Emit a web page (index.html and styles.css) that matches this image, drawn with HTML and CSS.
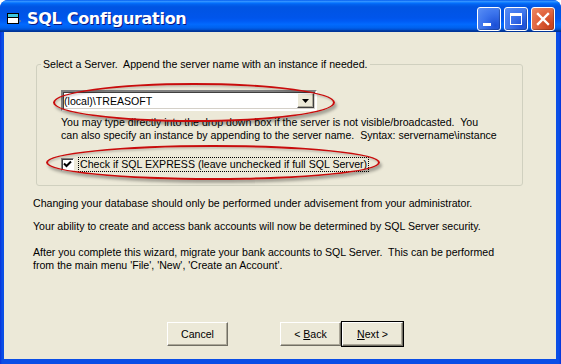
FILE: index.html
```html
<!DOCTYPE html>
<html lang="en">
<head>
  <meta charset="UTF-8" />
  <title>SQL Configuration</title>
  <link rel="stylesheet" href="styles.css">
</head>
<body>
  <div class="window">
    <div class="titlebar">
      <svg class="app-icon" width="14" height="12" viewBox="0 0 14 12">
        <rect x="0.5" y="0.5" width="11" height="10" fill="#fff" stroke="#000"/>
        <rect x="1" y="1" width="10" height="3" fill="#3cc7e0"/>
        <path d="M1 4.5 H11" stroke="#000"/>
        <path d="M12 8 H14" stroke="#8a8a8a"/>
      </svg>
      <span class="title">SQL Configuration</span>
      <div class="caption-buttons">
        <span class="cap-btn">
          <svg width="22" height="22" viewBox="0 0 22 22"><rect x="5" y="15" width="8" height="3" fill="#fff"/></svg>
        </span>
        <span class="cap-btn">
          <svg width="22" height="22" viewBox="0 0 22 22"><rect x="5.5" y="5.5" width="11" height="11" fill="none" stroke="#fff"/><rect x="5" y="5" width="12" height="3" fill="#fff"/></svg>
        </span>
        <span class="cap-btn close">
          <svg width="22" height="22" viewBox="0 0 22 22"><path d="M6 6 L16 16 M16 6 L6 16" stroke="#fff" stroke-width="2.4" stroke-linecap="square"/></svg>
        </span>
      </div>
    </div>

    <div class="client">
      <fieldset class="group">
        <legend>Select a Server.&nbsp; Append the server name with an instance if needed.</legend>
        <div class="combo">
          <span class="combo-text">(local)\TREASOFT</span>
          <span class="combo-btn">
            <svg width="7" height="4" viewBox="0 0 7 4"><path d="M0 0 H7 L3.5 4 Z" fill="#000"/></svg>
          </span>
        </div>
        <p class="hint">You may type directly into the drop down box if the server is not visible/broadcasted.&nbsp; You<br>can also specify an instance by appending to the server name.&nbsp; Syntax: servername\instance</p>
        <label class="check">
          <span class="box">
            <svg width="9" height="9" viewBox="0 0 9 9"><path d="M1 3.5 L3.5 6 L8 1.5" fill="none" stroke="#000" stroke-width="2"/></svg>
          </span>
          <span class="focus">Check if SQL EXPRESS (leave unchecked if full SQL Server)</span>
        </label>
      </fieldset>

      <p class="note first">Changing your database should only be performed under advisement from your administrator.</p>
      <p class="note">Your ability to create and access bank accounts will now be determined by SQL Server security.</p>
      <p class="note wide">After you complete this wizard, migrate your bank accounts to SQL Server.&nbsp; This can be performed<br>from the main menu 'File', 'New', 'Create an Account'.</p>

      <div class="buttons">
        <button class="btn">Cancel</button>
        <div class="nav">
          <button class="btn">&lt; <u>B</u>ack</button>
          <button class="btn default"><u>N</u>ext &gt;</button>
        </div>
      </div>
    </div>

    <!-- red highlight marks drawn over the dialog -->
    <div class="oval oval-server"></div>
    <div class="oval oval-express"></div>
  </div>
</body>
</html>
```

FILE: styles.css
```css
body {
  margin: 0;
  background: #fff;
  font-family: "Liberation Sans", Arial, sans-serif;
  font-size: 10.6px;
  color: #000;
}
.window {
  position: relative;
  width: 561px;
  height: 364px;
  display: flex;
  flex-direction: column;
  background: linear-gradient(90deg, #0831d9 0, #0a4ee6 2px, #0a4ee6 calc(100% - 2px), #0831d9 100%);
  border-radius: 8px 8px 0 0;
  overflow: hidden;
}
.titlebar {
  height: 32px;
  box-sizing: border-box;
  flex: none;
  display: flex;
  align-items: center;
  padding: 5px 6px 0 7px;
  background: linear-gradient(#0058ee 0%, #3593ff 4%, #288eff 6%, #127dff 8%, #036ffc 10%, #0262ee 14%, #0057e5 20%, #0054e3 24%, #0055eb 56%, #005bf5 66%, #026afe 76%, #0062ef 86%, #0052d6 92%, #0040ab 94%, #003092 100%);
}
.app-icon {
  flex: none;
  margin-top: 1px;
}
.title {
  margin-left: 6px;
  color: #fff;
  font-family: "DejaVu Sans", sans-serif;
  font-weight: bold;
  font-size: 16px;
  letter-spacing: -0.3px;
  text-shadow: 1px 1px #0a1883;
  flex: 1;
}
.caption-buttons {
  display: flex;
  gap: 3px;
}
.cap-btn {
  width: 22px;
  height: 22px;
  border: 1px solid #fff;
  border-radius: 3px;
  background: radial-gradient(circle at 80% 80%, #1b4fd6 0, #3b73ec 50%, #5a8ff5 100%);
  box-shadow: inset -1px -1px 1px rgba(0, 0, 0, 0.25);
}
.cap-btn svg {
  display: block;
}
.cap-btn.close {
  background: radial-gradient(circle at 80% 80%, #c8401c 0, #e0623c 50%, #ec8a66 100%);
}
.client {
  flex: 1;
  margin: 0 5px 5px 4px;
  background: #ece9d8;
  padding: 0 0 0 29px;
  display: flex;
  flex-direction: column;
}
.group {
  margin: 26px 0 0 3px;
  width: 487px;
  height: 128px;
  padding: 0 0 0 24px;
  border: 1px solid #d0d0bf;
  border-radius: 3px;
  box-sizing: border-box;
}
.group legend {
  padding: 0 2px;
  margin-left: -20px;
}
.combo {
  margin-top: 20px;
  width: 256px;
  height: 21px;
  box-sizing: border-box;
  display: flex;
  align-items: center;
  background: #fff;
  border: 2px solid;
  border-color: #808080 #fff #fff #808080;
  box-shadow: inset 1px 1px #404040, inset -1px -1px #d4d0c8;
}
.combo-text {
  flex: 1;
  padding-left: 1px;
}
.combo-btn {
  width: 17px;
  height: 15px;
  margin-right: 1px;
  box-sizing: border-box;
  display: flex;
  align-items: center;
  justify-content: center;
  background: #ece9d8;
  border: 1px solid;
  border-color: #fff #404040 #404040 #fff;
  box-shadow: inset -1px -1px #aca899;
}
.hint {
  margin: 5px 0 0;
  line-height: 13px;
}
.check {
  display: flex;
  align-items: center;
  margin-top: 16px;
}
.box {
  width: 13px;
  height: 13px;
  box-sizing: border-box;
  display: flex;
  align-items: center;
  justify-content: center;
  background: #fff;
  border: 1px solid;
  border-color: #808080 #fff #fff #808080;
  box-shadow: inset 1px 1px #404040;
}
.focus {
  margin-left: 5px;
  padding: 0 1px;
  outline: 1px dotted #000;
  line-height: 13px;
}
.note {
  margin: 10px 0 0;
  line-height: 13px;
}
.note.first {
  margin-top: 11px;
}
.note.wide {
  margin-top: 13px;
}
.buttons {
  margin-top: auto;
  margin-bottom: 13px;
  display: flex;
  padding-left: 134px;
}
.nav {
  display: flex;
  margin-left: 52px;
}
.btn {
  width: 61px;
  height: 24px;
  padding: 0;
  font: inherit;
  color: #000;
  background: #ece9d8;
  border: 1px solid;
  border-color: #fff #716f64 #716f64 #fff;
  box-shadow: inset -1px -1px #aca899;
}
.btn.default {
  outline: 1px solid #000;
  margin-left: 1px;
}
.oval {
  position: absolute;
  border: 2px solid #c80c0c;
  border-radius: 50%;
  box-shadow: 2px 3px 3px rgba(0, 0, 0, 0.3), inset 1px 2px 2px rgba(0, 0, 0, 0.15);
}
.oval-server {
  left: 53px;
  top: 83px;
  width: 278px;
  height: 35px;
}
.oval-express {
  left: 46px;
  top: 145px;
  width: 330px;
  height: 31px;
}
```
